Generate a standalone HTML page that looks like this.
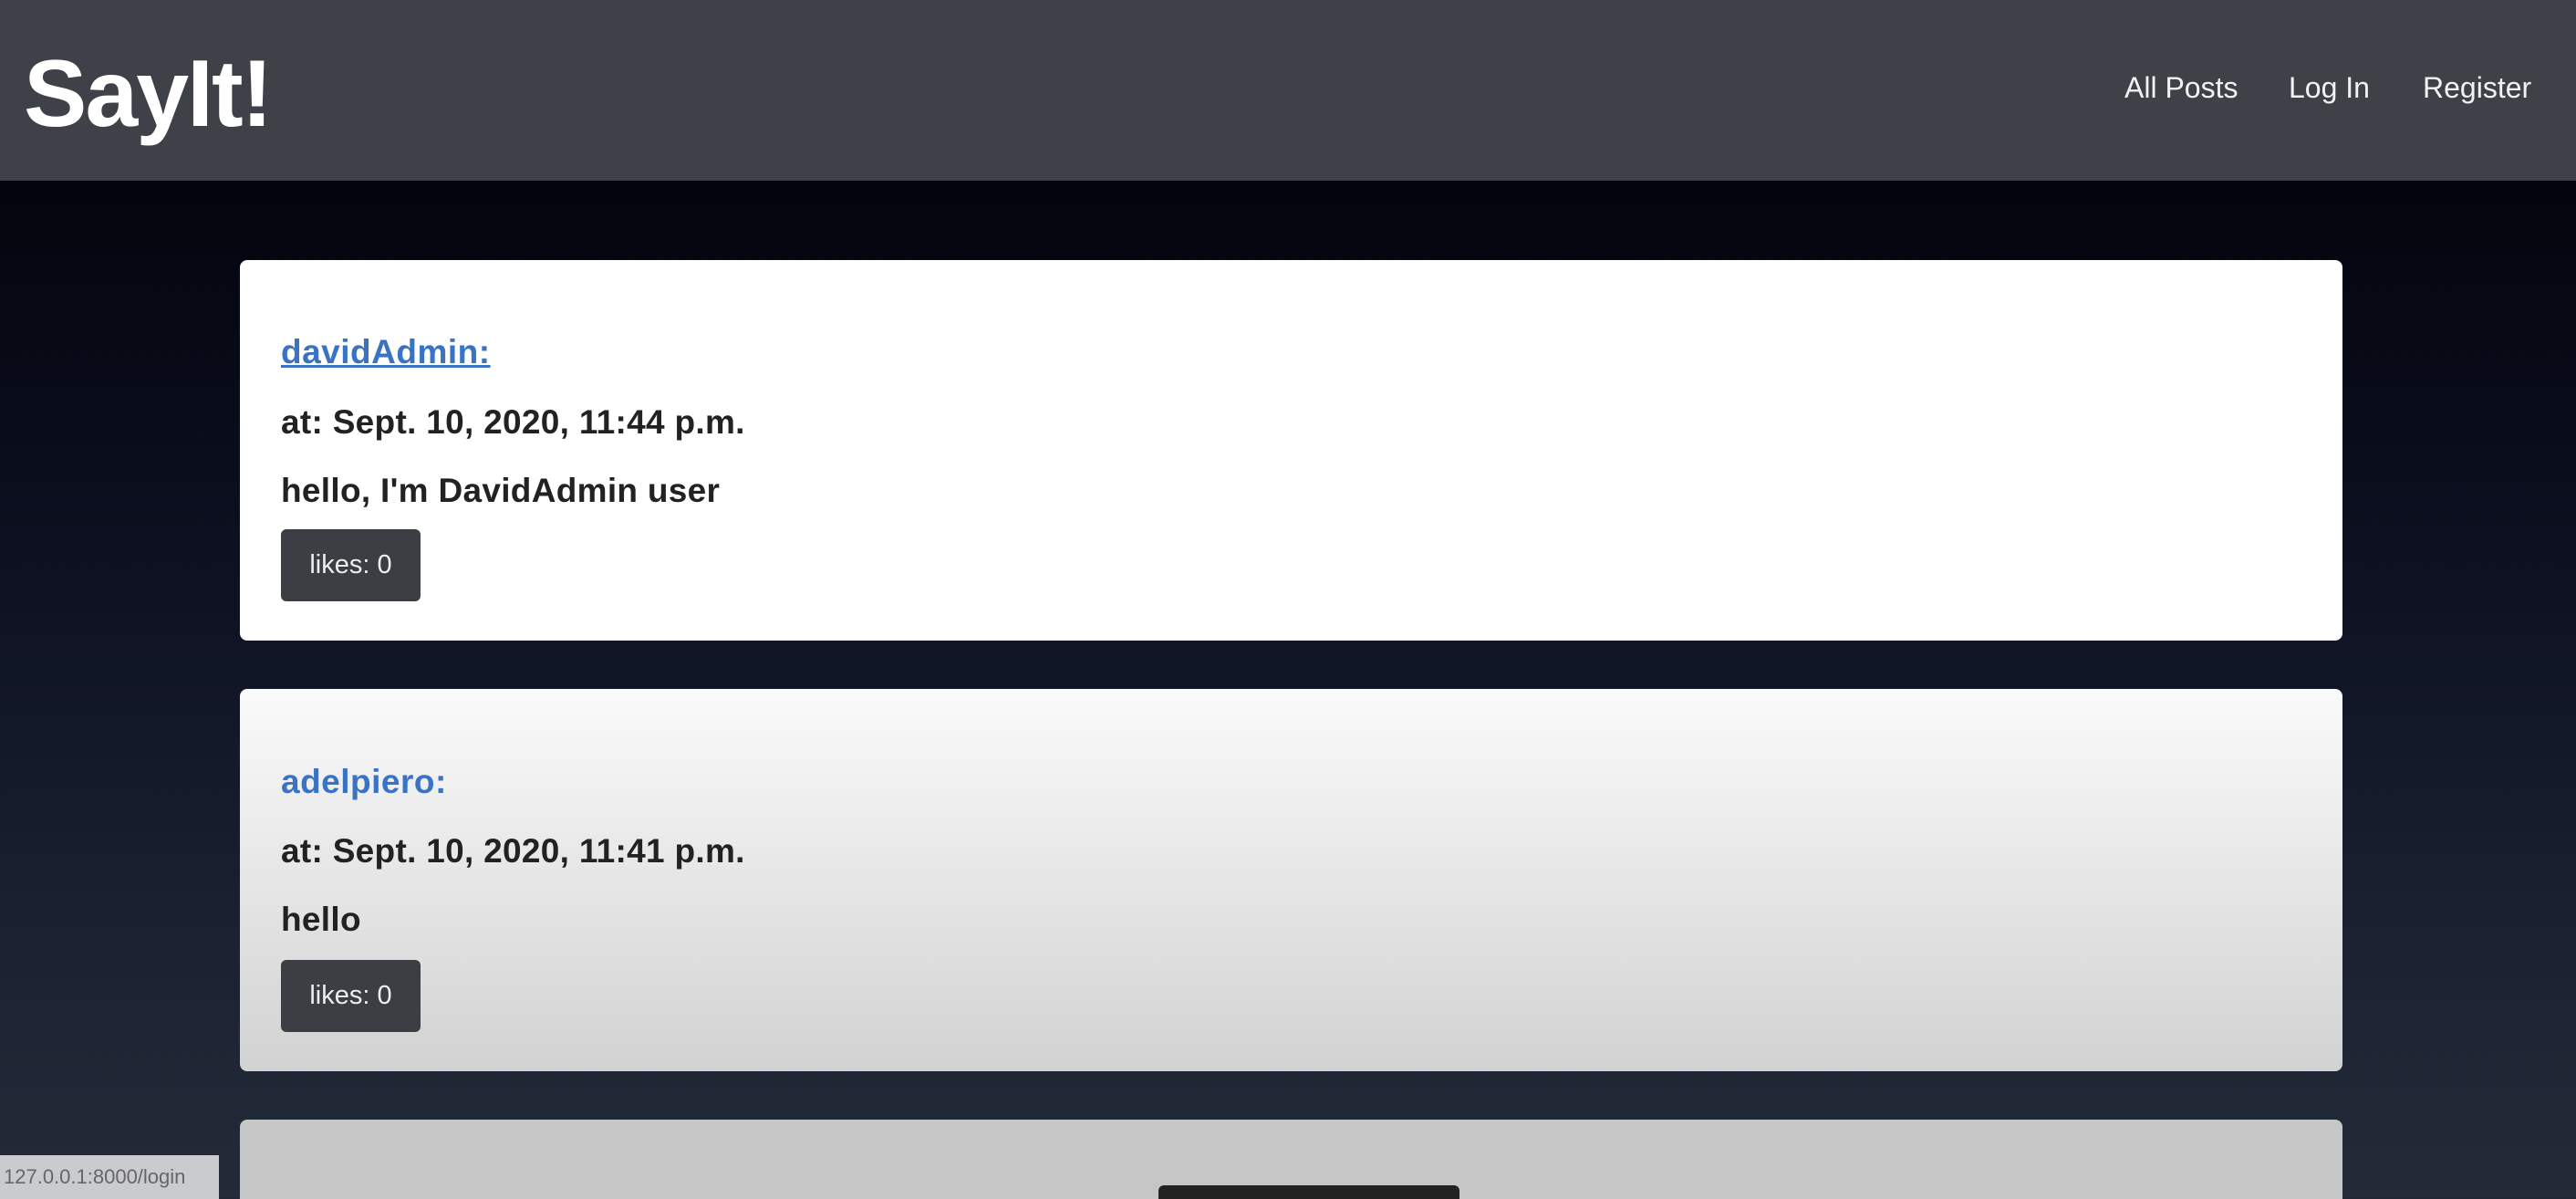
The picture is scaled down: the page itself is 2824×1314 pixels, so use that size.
<!DOCTYPE html>
<html><head><meta charset="utf-8"><style>
*{margin:0;padding:0;box-sizing:border-box}
html,body{width:2824px;height:1314px;overflow:hidden}
body{font-family:"Liberation Sans","DejaVu Sans",sans-serif;background:linear-gradient(180deg,#03040d 198px,#0c1020 600px,#1a2030 1000px,#232b38 1314px);position:relative}
.nav{position:absolute;left:0;top:0;width:2824px;height:198px;background:#3e4147}
.logo{position:absolute;left:26px;top:44px;font-size:104px;font-weight:bold;color:#fff;letter-spacing:-2px}
.nav a{position:absolute;top:78px;font-size:32px;color:#f2f2f2;text-decoration:none}
.card{position:absolute;left:263px;width:2305px;border-radius:8px}
.u{position:absolute;left:45px;font-size:37px;color:#3a73c4;font-weight:bold;letter-spacing:0.5px}
.t{position:absolute;left:45px;font-size:37px;color:#222;font-weight:bold;letter-spacing:0.3px}
.b{position:absolute;left:45px;width:153px;height:79px;background:#3b3e43;border-radius:6px;color:#eee;font-size:29px;text-align:center;line-height:79px}
</style></head><body>
<div class="nav"><div class="logo">SayIt!</div>
<a style="left:2329px">All Posts</a><a style="left:2509px">Log In</a><a style="left:2656px">Register</a></div>
<div class="card" style="top:285px;height:417px;background:#fff">
<div class="u" style="top:80px;text-decoration:underline">davidAdmin:</div>
<div class="t" style="top:157px">at: Sept. 10, 2020, 11:44 p.m.</div>
<div class="t" style="top:232px">hello, I'm DavidAdmin user</div>
<div class="b" style="top:295px">likes: 0</div>
</div>
<div class="card" style="top:755px;height:419px;background:linear-gradient(180deg,#fafafa,#d2d2d2)">
<div class="u" style="top:81px">adelpiero:</div>
<div class="t" style="top:157px">at: Sept. 10, 2020, 11:41 p.m.</div>
<div class="t" style="top:232px">hello</div>
<div class="b" style="top:297px">likes: 0</div>
</div>
<div class="card" style="top:1227px;height:120px;background:#c6c6c6"></div>
<div style="position:absolute;left:0;top:1266px;width:240px;height:48px;background:#c9cbcf;color:#666;font-size:22px;line-height:48px;padding-left:4px">127.0.0.1:8000/login</div>
<div style="position:absolute;left:1270px;top:1299px;width:330px;height:20px;background:#222;border-radius:6px 6px 0 0"></div>
</body></html>
